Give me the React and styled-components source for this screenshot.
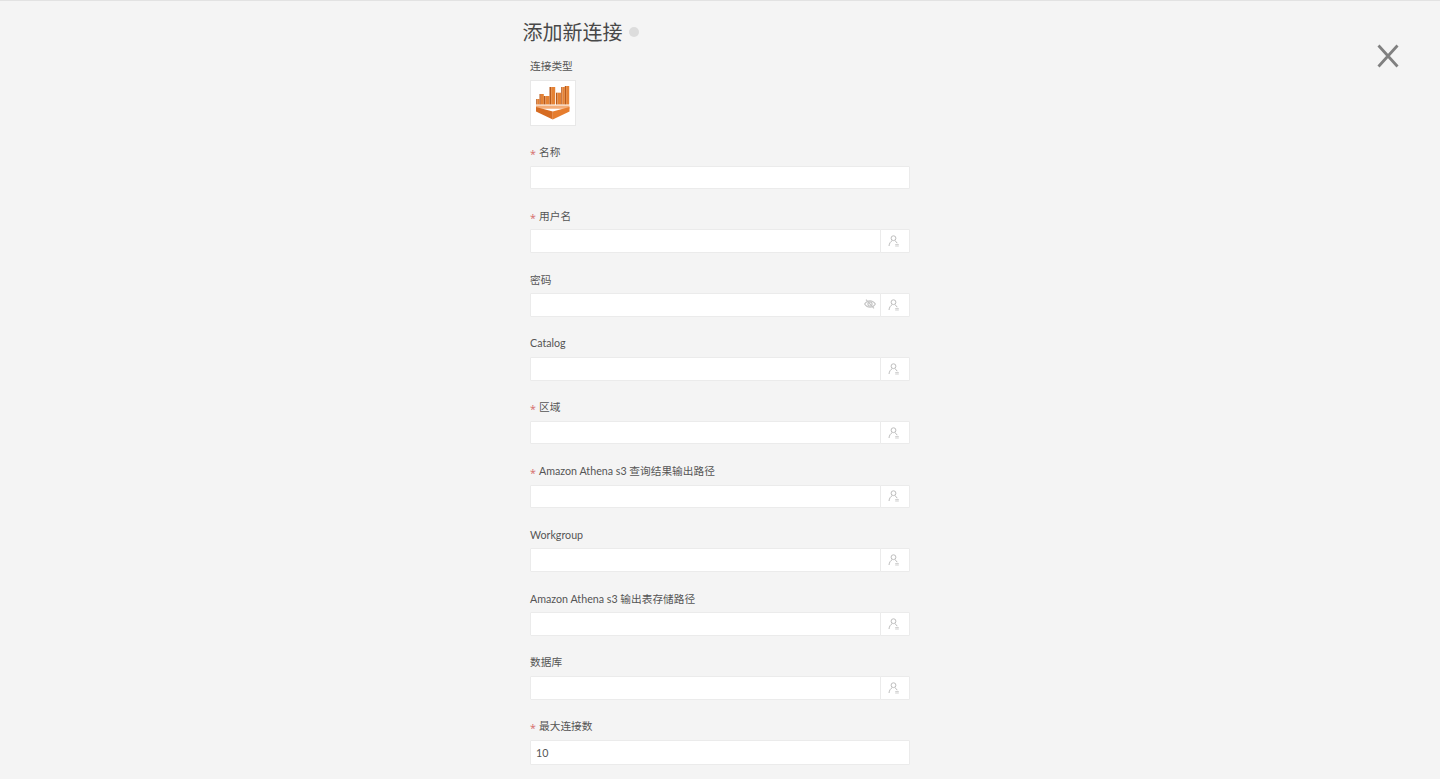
import React from "react";
import styled, { createGlobalStyle } from "styled-components";

const GlobalStyle = createGlobalStyle`
  html, body { margin: 0; padding: 0; height: 100%; overflow: hidden; }
  body {
    background: #f4f4f4;
    font-family: Lato, "Noto Sans CJK SC", sans-serif;
    color: #555;
  }
`;

const fields = [
  { label: "名称", required: true, plain: true },
  { label: "用户名", required: true },
  { label: "密码", eye: true },
  { label: "Catalog" },
  { label: "区域", required: true },
  { label: "Amazon Athena s3 查询结果输出路径", required: true },
  { label: "Workgroup" },
  { label: "Amazon Athena s3 输出表存储路径" },
  { label: "数据库" },
  { label: "最大连接数", required: true, plain: true, value: "10", tall: true },
];

const logoBars = [
  { x: 0.2, top: 13, w: 3.3 },
  { x: 3.5, top: 8, w: 4.3 },
  { x: 7.8, top: 10, w: 5.7 },
  { x: 13.5, top: 1, w: 5.7 },
  { x: 20, top: 6.7, w: 5 },
  { x: 25.2, top: 1, w: 3.6 },
  { x: 28.8, top: 0, w: 4.4 },
];

const UserIcon = () => (
  <svg width="12" height="12" viewBox="0 0 12 12" fill="none" stroke="#bdbdbd" strokeWidth="1">
    <circle cx="5.5" cy="3.2" r="2.4" />
    <path d="M1 11c.3-2.700 1.600-4.400 3-5.200M7 5.800c1 .5 1.700 1.300 2.100 2.400" />
    <path d="M7.200 9.600h3.600M7.200 11h3.600" stroke="#cfcfcf" />
  </svg>
);

const EyeOffIcon = () => (
  <svg width="12" height="12" viewBox="0 0 12 12" fill="none" stroke="#c4c4c4" strokeWidth="1.100">
    <path d="M.6 6C2 3.800 3.800 2.700 6 2.700S10 3.800 11.400 6C10 8.200 8.200 9.300 6 9.300S2 8.200.6 6z" />
    <circle cx="6" cy="6" r="2.100" />
    <path d="M2 1.600l8 8.800" />
  </svg>
);

const AthenaLogo = () => (
  <svg width="34" height="34" viewBox="0 0 34 34">
    {logoBars.map((b) => (
      <g key={b.x}>
        <rect x={b.x} y={b.top} width={b.w * 0.3} height={18.500 - b.top} fill="#b85a1c" />
        <rect x={b.x + b.w * 0.3} y={b.top} width={b.w * 0.7} height={18.500 - b.top} fill="#e58234" />
      </g>
    ))}
    <path d="M0 19.500h33.500v3.200H0z" fill="#f4ad78" />
    <path d="M0 21v4.500l16.750 8V25.500z" fill="#d66c22" />
    <path d="M33.500 21v4.500l-16.750 8V25.500z" fill="#e67d2e" />
  </svg>
);

export default function App() {
  return (
    <>
      <GlobalStyle />
      <Page>
        <CloseButton aria-label="关闭">
          <svg width="24" height="24" viewBox="0 0 24 24" fill="none" stroke="#808080" strokeWidth="2.800">
            <path d="M2.500 1.500l19 21M21.500 1.500l-19 21" />
          </svg>
        </CloseButton>
        <Form>
          <TitleRow>
            <Title>添加新连接</Title>
            <TitleDot />
          </TitleRow>
          <TypeLabel>连接类型</TypeLabel>
          <LogoBox>
            <AthenaLogo />
          </LogoBox>
          {fields.map((f) => (
            <Field key={f.label}>
              <Label>
                {f.required && <Star>*</Star>}
                {f.label}
              </Label>
              <InputRow>
                <InputWrap>
                  <Input defaultValue={f.value} $tall={f.tall} />
                  {f.eye && (
                    <EyeSlot>
                      <EyeOffIcon />
                    </EyeSlot>
                  )}
                </InputWrap>
                {!f.plain && (
                  <Addon>
                    <UserIcon />
                  </Addon>
                )}
              </InputRow>
            </Field>
          ))}
        </Form>
      </Page>
    </>
  );
}

const Page = styled.div`
  position: relative;
  height: 779px;
  overflow: hidden;
  box-sizing: border-box;
  border-top: 1px solid #e2e2e2;
  display: flex;
  justify-content: center;
`;

const CloseButton = styled.button`
  position: absolute;
  top: 42.500px;
  right: 40.500px;
  width: 24px;
  height: 24px;
  padding: 0;
  border: 0;
  background: none;
  display: flex;
`;

const Form = styled.div`
  width: 380px;
  display: flex;
  flex-direction: column;
  & > * {
    flex: none;
  }
`;

const TitleRow = styled.div`
  display: flex;
  align-items: center;
  gap: 6px;
  margin: 17px 0 0 -7.500px;
  height: 28px;
`;

const Title = styled.h2`
  margin: 0;
  font-size: 20px;
  line-height: 28px;
  font-weight: 400;
  color: #484848;
`;

const TitleDot = styled.span`
  width: 10px;
  height: 10px;
  border-radius: 50%;
  background: #dcdcdc;
`;

const TypeLabel = styled.div`
  margin-top: 13px;
  font-size: 10.700px;
  line-height: 14px;
  color: #555;
`;

const LogoBox = styled.div`
  box-sizing: border-box;
  width: 46px;
  height: 46px;
  margin: 7px 0 19.100px;
  background: #fff;
  border: 1px solid #e8e8e8;
  display: flex;
  align-items: center;
  justify-content: center;
`;

const Field = styled.div`
  height: 63.800px;
`;

const Label = styled.div`
  height: 14px;
  font-size: 10.700px;
  line-height: 14px;
  color: #555;
  margin-bottom: 6.500px;
`;

const Star = styled.span`
  display: inline-block;
  width: 9px;
  line-height: 0;
  font-family: "Open Sans", sans-serif;
  vertical-align: -2px;
  color: #d46a6a;
`;

const InputRow = styled.div`
  display: flex;
`;

const InputWrap = styled.div`
  position: relative;
  flex: 1;
  min-width: 0;
`;

const Input = styled.input`
  box-sizing: border-box;
  display: block;
  width: 100%;
  height: ${({ $tall }) => ($tall ? "25px" : "23.600px")};
  padding: 0 5px;
  background: #fff;
  border: 1px solid #ebebeb;
  border-radius: 1px;
  outline: none;
  font: 10.700px Lato, "Open Sans", sans-serif;
  color: #555;
`;

const EyeSlot = styled.span`
  position: absolute;
  right: 5px;
  top: 5px;
  display: flex;
`;

const Addon = styled.div`
  box-sizing: border-box;
  width: 30px;
  height: 23.600px;
  margin-left: -1px;
  padding-right: 2px;
  flex: none;
  background: #fff;
  border: 1px solid #ebebeb;
  border-radius: 1px;
  display: flex;
  align-items: center;
  justify-content: center;
`;
